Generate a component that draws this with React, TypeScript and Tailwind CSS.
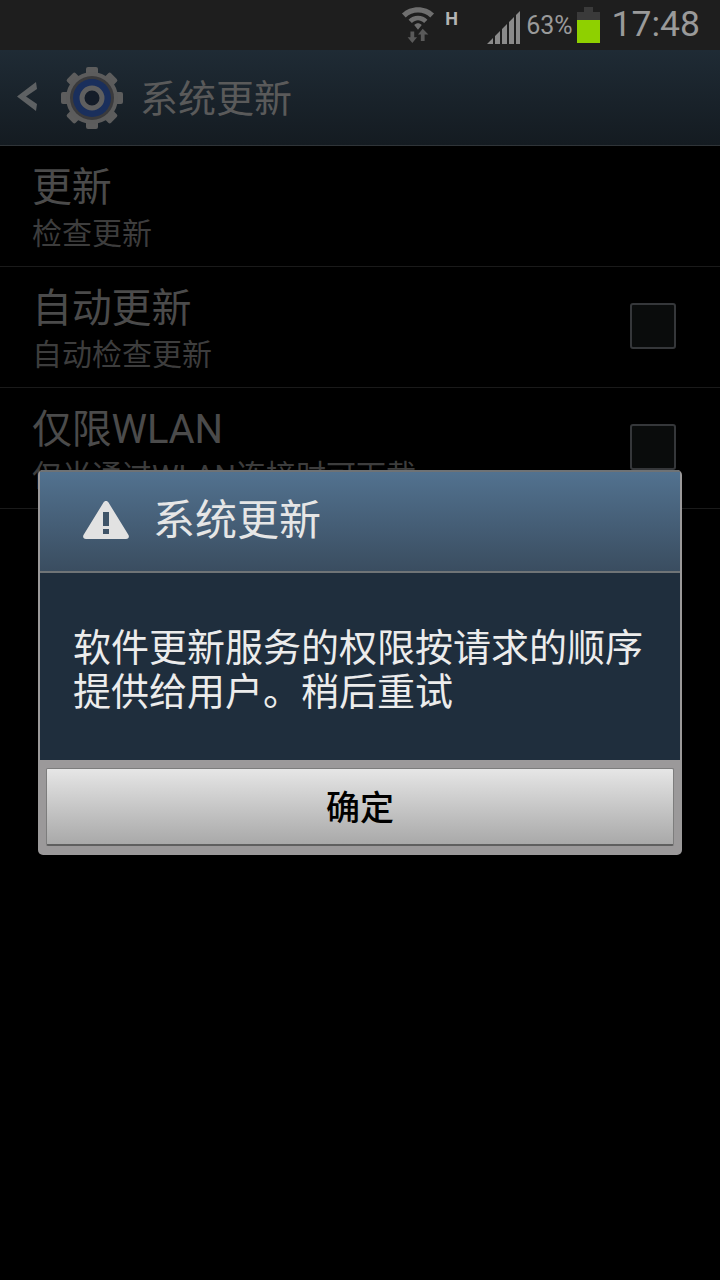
const CJK = "font-['Roboto','Noto_Sans_CJK_SC',sans-serif]";

function Row({ title, sub, check }: { title: string; sub: string; check?: boolean }) {
  return (
    <div className="relative h-[121px] border-b border-[#1a1a1a] overflow-hidden flex items-center justify-between pl-[32px] pr-[44px]">
      <div className="flex flex-col text-[#4b4b4b]">
        <div className="text-[40px] leading-[50px] h-[50px] mt-[4px] tracking-[-0.2px]">{title}</div>
        <div className="text-[30px] leading-[40px] h-[40px] text-[#3d3d3d] mt-[1px]">{sub}</div>
      </div>
      {check && <div className="w-[46px] h-[46px] mt-[-2px] rounded-[3px] border-2 border-[#35373a] bg-[#0a0c0c]" />}
    </div>
  );
}

export default function App() {
  return (
    <div className={`relative w-[720px] h-[1280px] bg-black overflow-hidden ${CJK}`}>
      <div className="h-[50px] bg-[#1e1e1e] flex items-center justify-end pr-[20px] text-[#8a8a8a]">
        <svg width="34" height="38" viewBox="0 0 36 40" className="mr-[10px] mt-[-2px]">
          <path d="M1 9 C10 0 26 0 35 9 L31 13 C24 6 12 6 5 13Z M8 15.5 C13 10 23 10 28 15.5 L24.5 19 C20 15 16 15 11.5 19Z M14 21 C16.5 18.5 19.500 18.500 22 21 L18 26Z" fill="#6f6f6f" />
          <path d="M10 28 H14 V34 H17 L12 40 L7 34 H10Z" fill="#5a5a5a" />
          <path d="M19 38 H23 V31 H27 L21 25 L16 31 H19Z" transform="translate(2 0)" fill="#5a5a5a" />
        </svg>
        <div className="w-[16px] text-[18px] leading-none font-bold text-[#b4b4b4] mb-[12px] mr-[26px] font-['Roboto',sans-serif]">H</div>
        <svg width="34" height="34" viewBox="0 0 34 34" className="mr-[5px] mt-[6px]">
          <path d="M0 33 L6 27 V33Z M8 33 V25 L13 20 V33Z M15 33 V18 L20 13 V33Z M22 33 V11 L27 6 V33Z M29 33 V4 L33 0 V33Z" fill="#8a8a8a" />
        </svg>
        <div className="text-[25px] leading-none mr-[4px] mt-[1px] text-[#9a9a9a] font-['Roboto',sans-serif]">63%</div>
        <div className="flex flex-col items-center w-[23px] mr-[12px] mt-[-1px]">
          <div className="w-[9px] h-[5px] bg-[#3a3a3a]" />
          <div className="w-[23px] h-[8px] bg-[#3a3a3a]" />
          <div className="w-[23px] h-[23px] bg-[#8fd000]" />
        </div>
        <div className="text-[35.5px] leading-none text-[#9a9a9a] font-['Roboto',sans-serif] mt-[-1px]">17:48</div>
      </div>

      <div className="h-[96px] border-b border-[#2f3438] bg-gradient-to-b from-[#1f2b35] to-[#141b21] flex items-center">
        <svg width="22" height="32" viewBox="0 0 22 32" className="ml-[16px] mt-[-2px]">
          <path d="M20 1 L1 15.500 L20 30 L21 23 L10 15.500 L21 8Z" fill="#5e6163" />
        </svg>
        <svg width="62" height="62" viewBox="0 0 62 62" className="ml-[23px]">
          <g fill="#5d5d5d">
            {[0, 45, 90, 135, 180, 225, 270, 315].map((a) => (
              <rect key={a} x="25" y="0" width="12" height="12" rx="2" transform={`rotate(${a} 31 31)`} />
            ))}
          </g>
          <circle cx="31" cy="31" r="26" fill="#5c5c5c" />
          <circle cx="31" cy="31" r="22" fill="#3a3a3c" />
          <circle cx="31" cy="31" r="19" fill="#1a2f5c" />
          <circle cx="31" cy="31" r="10" fill="#141c28" stroke="#5f5f5f" strokeWidth="5" />
        </svg>
        <div className="ml-[17px] text-[38px] leading-none text-[#5a5a5a] mt-[2px]">系统更新</div>
      </div>

      <Row title="更新" sub="检查更新" />
      <Row title="自动更新" sub="自动检查更新" check />
      <Row title="仅限WLAN" sub="仅当通过WLAN连接时可下载" check />

      <div className="absolute left-[38px] top-[470px] w-[644px] h-[385px] rounded-[5px] bg-[#9b999a] overflow-hidden flex flex-col">
        <div className="mx-[2px] mt-0 border-t-2 border-[#6e7275] h-[103px] border-b-2 border-b-[#6f7477] bg-gradient-to-b from-[#527290] to-[#3a4d60] flex items-center">
          <svg width="48" height="42" viewBox="0 0 48 42" className="ml-[42px] mt-[-3px]">
            <path d="M24 2 C25 2 26 2.500 26.500 3.500 L46.500 36 C47.500 38 46.500 40 44 40 H4 C1.500 40 0.500 38 1.500 36 L21.500 3.500 C22 2.500 23 2 24 2Z" fill="#e2e2e2" />
            <rect x="21" y="13" width="6" height="14" fill="#3f5468" />
            <rect x="21" y="30" width="6" height="5" fill="#3f5468" />
          </svg>
          <div className="ml-[23px] text-[42px] leading-none text-[#e6e6e6] mt-[-2px]">系统更新</div>
        </div>
        <div className="mx-[2px] h-[187px] bg-[#1f2e3d] text-[#ececec] text-[38px] leading-[44px] pl-[33px] pt-[53px]">
          软件更新服务的权限按请求的顺序<br />提供给用户。稍后重试
        </div>
        <div className="flex-1 px-[8px] pt-[8px] pb-[9px]">
          <div className="h-full rounded-[2px] border-t border-[#7d7d7d] border-b-2 border-b-[#5f5f5f] border-x border-x-[#7d7d7d] bg-gradient-to-b from-[#e6e6e6] to-[#a9a9a9] flex items-center justify-center text-[34px] font-medium text-black leading-none pt-[3px]">
            确定
          </div>
        </div>
      </div>
    </div>
  );
}
